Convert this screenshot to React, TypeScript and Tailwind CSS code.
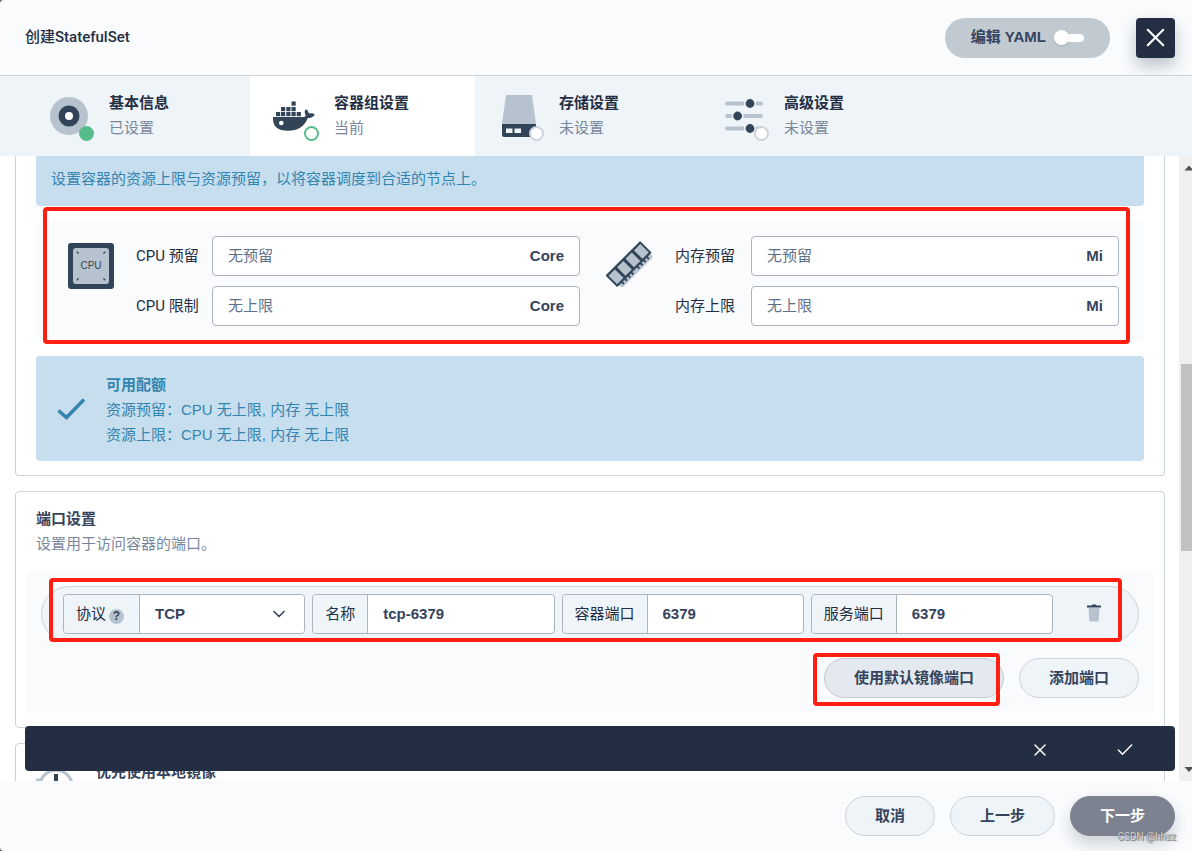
import { ReactNode } from 'react';
import { Check, ChevronDown, X } from 'lucide-react';

type StepState = 'done' | 'current' | 'pending';

const DARK = '#324558';
const LIGHT = '#b6c2cd';

function BasicIcon() {
  return (
    <svg width="48" height="48" viewBox="0 0 48 48">
      <circle cx="24" cy="24" r="19" fill={LIGHT} />
      <circle cx="24" cy="24" r="10.5" fill={DARK} />
      <circle cx="24" cy="24" r="4" fill="#fff" />
    </svg>
  );
}

function DockerIcon() {
  const boxes = [
    [21.5, 9.5],
    [11, 15], [16.3, 15], [21.5, 15],
    [6, 20], [11, 20], [16.3, 20], [21.5, 20], [26.7, 20],
  ];
  return (
    <svg width="48" height="48" viewBox="0 0 48 48" fill={DARK}>
      {boxes.map(([x, y]) => (
        <rect key={`${x}-${y}`} x={x} y={y} width="4.2" height="4.2" />
      ))}
      <path d="M3 25H33.5C35.3 25 36 24 35.4 22.6C34.4 20.6 34.4 18.6 35.8 17.2C37.6 18 38.6 19.6 38.9 21.6C41 20.9 43.3 21.2 44.8 22.4C43.6 24.9 41 26 37.8 26C34.6 34.2 28 38.8 18 38.8C8 38.8 2.4 34.8 3 25Z" />
      <circle cx="11.3" cy="31" r="2.3" fill="#fff" />
    </svg>
  );
}

function StorageIcon() {
  return (
    <svg width="48" height="48" viewBox="0 0 48 48">
      <path d="M11 3H37L41 32H7Z" fill={LIGHT} />
      <path d="M7 32H41V43A2 2 0 0 1 39 45H9A2 2 0 0 1 7 43Z" fill={DARK} />
      <rect x="11" y="36.5" width="6.5" height="4.5" fill="#eff4f9" />
      <rect x="19.5" y="36.5" width="6.5" height="4.5" fill="#eff4f9" />
    </svg>
  );
}

function SlidersIcon() {
  const rows = [[30, 11.5], [17.6, 24], [30, 36.5]];
  return (
    <svg width="48" height="48" viewBox="0 0 48 48">
      {rows.map(([x, y]) => (
        <g key={y}>
          <path d={`M7.2 ${y}H41`} stroke={LIGHT} strokeWidth="4" strokeLinecap="round" />
          <circle cx={x} cy={y} r="6" fill="#eff4f9" />
          <circle cx={x} cy={y} r="4.4" fill={DARK} />
        </g>
      ))}
    </svg>
  );
}

function CpuIcon() {
  return (
    <svg className="mt-[7px] shrink-0" width="46" height="46" viewBox="0 0 46 46">
      <rect width="46" height="46" rx="3" fill={DARK} />
      <rect x="5" y="5" width="36" height="36" rx="3" fill={LIGHT} />
      <g fill="none" stroke={DARK} strokeWidth="1.3">
        <path d="M8.8 8.8l1.8 1.8M37.2 8.8l-1.8 1.8M8.8 37.2l1.8-1.8M37.2 37.2l-1.8-1.8" />
      </g>
      <text x="23" y="25.5" textAnchor="middle" fontSize="10" fontFamily="Liberation Sans, sans-serif" fill={DARK}>
        CPU
      </text>
    </svg>
  );
}

function MemoryIcon() {
  return (
    <svg className="mt-[5px] w-[46px] shrink-0 overflow-visible" width="48" height="48" viewBox="0 0 48 48">
      <g transform="translate(-1.5 35) rotate(-45) scale(1.04)">
        <path d="M3 16H47V19A1.5 1.5 0 0 1 45.5 20.5H4.5A1.5 1.5 0 0 1 3 19Z" fill={LIGHT} />
        {[6, 10.5, 15, 19.5, 28, 32.5, 37, 41.5].map((x) => (
          <rect key={x} x={x} y="16" width="2" height="3" fill={DARK} />
        ))}
        <rect width="49" height="16.5" rx="1" fill={DARK} />
        {[2, 14, 26, 38].map((x) => (
          <rect key={x} x={x} y="2.3" width="9" height="12" fill={LIGHT} />
        ))}
      </g>
    </svg>
  );
}

function TrashIcon() {
  return (
    <svg width="16" height="20" viewBox="0 0 16 20">
      <path d="M2.5 4H13.500L12.8 16A1.5 1.5 0 0 1 11.3 17.500H4.7A1.5 1.5 0 0 1 3.2 16Z" fill={LIGHT} />
      <path d="M1 1.5H5.5L6.2 0.5H9.8L10.5 1.5H15V3.5H1Z" fill={DARK} />
    </svg>
  );
}

function PullIcon() {
  return (
    <svg width="40" height="40" viewBox="0 0 40 40" fill="none">
      <circle cx="20" cy="20.500" r="16.300" stroke={LIGHT} strokeWidth="3" />
      <path d="M0 12.500H5V15H0Z" fill={LIGHT} />
      <path d="M20 8V22" stroke={DARK} strokeWidth="4" />
    </svg>
  );
}

const steps: { title: string; status: string; state: StepState; icon: ReactNode }[] = [
  { title: '基本信息', status: '已设置', state: 'done', icon: <BasicIcon /> },
  { title: '容器组设置', status: '当前', state: 'current', icon: <DockerIcon /> },
  { title: '存储设置', status: '未设置', state: 'pending', icon: <StorageIcon /> },
  { title: '高级设置', status: '未设置', state: 'pending', icon: <SlidersIcon /> },
];

const dotStyles: Record<StepState, string> = {
  done: 'border-[#55bc8a] bg-[#55bc8a]',
  current: 'border-[#55bc8a] bg-white',
  pending: 'border-[#ccd3db] bg-white',
};

function Steps() {
  return (
    <nav className="flex h-20 shrink-0 bg-[#eff4f9] pl-[25px]">
      {steps.map((step) => (
        <div
          key={step.title}
          className={`flex w-[225px] items-center gap-4 pl-5 ${step.state === 'current' ? 'bg-white' : ''}`}
        >
          <div className="relative">
            {step.icon}
            <span className={`absolute -right-px -bottom-px size-[15px] rounded-full border-2 ${dotStyles[step.state]}`} />
          </div>
          <div className="leading-[25px]">
            <p className="font-bold text-[#242e42]">{step.title}</p>
            <p className="text-[#79879c]">{step.status}</p>
          </div>
        </div>
      ))}
    </nav>
  );
}

function Highlight({ className }: { className: string }) {
  return <div className={`pointer-events-none absolute rounded border-4 border-[#ff1f12] ${className}`} />;
}

function LimitField({ id, label, placeholder, unit }: { id: string; label: string; placeholder: string; unit: string }) {
  return (
    <div className="flex items-center">
      <label htmlFor={id} className="w-[76px] shrink-0 whitespace-nowrap text-[#242e42]">
        {label}
      </label>
      <div className="flex h-10 min-w-0 flex-1 items-center rounded border border-[#abb4be] bg-white px-[15px]">
        <input
          id={id}
          placeholder={placeholder}
          className="min-w-0 flex-1 outline-none placeholder:text-[#5f708a]"
        />
        <span className="font-['Liberation_Sans'] font-bold text-[#36435c]">{unit}</span>
      </div>
    </div>
  );
}

function PortField({ id, label, help, children }: { id: string; label: string; help?: boolean; children: ReactNode }) {
  return (
    <div className="flex h-10 min-w-0 flex-1 rounded border border-[#abb4be] bg-white">
      <div
        className={`flex shrink-0 items-center gap-[3px] rounded-l border-r border-[#abb4be] bg-[#eff4f9] pl-3 text-[#242e42] ${help ? 'pr-[15px]' : 'pr-3'}`}
      >
        <label htmlFor={id}>{label}</label>
        {help && (
          <span className="mt-1 flex size-[15px] items-center justify-center rounded-full bg-[#b6c2cd] font-['Liberation_Sans'] text-[12px] font-bold text-[#324558]">
            ?
          </span>
        )}
      </div>
      {children}
    </div>
  );
}

function TextPort({ id, label, value }: { id: string; label: string; value: string }) {
  return (
    <PortField id={id} label={label}>
      <input
        id={id}
        defaultValue={value}
        className="min-w-0 flex-1 px-[15px] font-['Liberation_Sans'] font-bold text-[#36435c] outline-none"
      />
    </PortField>
  );
}

function PillButton({ children, className = 'border-[#ccd3db] bg-[#eff4f9] text-[#36435c]' }: { children: ReactNode; className?: string }) {
  return (
    <button type="button" className={`h-10 rounded-full border px-[29px] font-bold whitespace-nowrap ${className}`}>
      {children}
    </button>
  );
}

function ResourceCard() {
  return (
    <section className="rounded-b border border-t-0 border-[#ccd3db] px-5 pb-[14px]">
      <p className="rounded-b bg-[#c7deef] px-[15px] pt-[11px] pb-[14px] leading-[25px] text-[#3385b0]">
        设置容器的资源上限与资源预留，以将容器调度到合适的节点上。
      </p>
      <div className="relative my-[15px] grid grid-cols-2 gap-[27px] rounded bg-[#f9fbfd] py-[15px] pr-[25px] pl-8">
        <div className="flex gap-[22px]">
          <CpuIcon />
          <div className="flex min-w-0 flex-1 flex-col gap-[10px]">
            <LimitField id="cpu-request" label="CPU 预留" placeholder="无预留" unit="Core" />
            <LimitField id="cpu-limit" label="CPU 限制" placeholder="无上限" unit="Core" />
          </div>
        </div>
        <div className="flex gap-[22px]">
          <MemoryIcon />
          <div className="flex min-w-0 flex-1 flex-col gap-[10px]">
            <LimitField id="memory-request" label="内存预留" placeholder="无预留" unit="Mi" />
            <LimitField id="memory-limit" label="内存上限" placeholder="无上限" unit="Mi" />
          </div>
        </div>
        <Highlight className="-top-[14px] right-[14px] -bottom-[3px] left-[7px]" />
      </div>
      <div className="flex items-center gap-5 rounded bg-[#c7deef] px-5 pt-4 pb-[14px] leading-[25px] text-[#3385b0]">
        <svg width="30" height="30" viewBox="0 0 30 30" fill="none">
          <path d="M2.5 15.500L10.5 22.500L28 4.500" stroke="currentColor" strokeWidth="3.5" />
        </svg>
        <div className="font-['Liberation_Sans','Noto_Sans_CJK_SC',sans-serif]">
          <p className="font-bold">可用配额</p>
          <p>资源预留：CPU 无上限, 内存 无上限</p>
          <p>资源上限：CPU 无上限, 内存 无上限</p>
        </div>
      </div>
    </section>
  );
}

function PortCard() {
  return (
    <section className="rounded border border-[#ccd3db] px-[10px] pt-[15px] pb-[14px]">
      <div className="px-[10px] leading-[25px]">
        <h2 className="font-bold text-[#36435c]">端口设置</h2>
        <p className="text-[#79879c]">设置用于访问容器的端口。</p>
      </div>
      <div className="relative mt-[14px] rounded bg-[#f9fbfd] p-[15px]">
        <div className="flex items-center gap-[7px] rounded-full border border-[#ccd3db] bg-[#eff4f9] py-[7px] pr-7 pl-[21px]">
          <PortField id="protocol" label="协议" help>
            <div className="relative min-w-0 flex-1">
              <select
                id="protocol"
                className="h-full w-full appearance-none rounded-r bg-white px-[15px] font-['Liberation_Sans'] font-bold text-[#36435c] outline-none"
              >
                <option>TCP</option>
              </select>
              <ChevronDown className="pointer-events-none absolute top-[9px] right-[15px] size-5 text-[#324558]" />
            </div>
          </PortField>
          <TextPort id="port-name" label="名称" value="tcp-6379" />
          <TextPort id="container-port" label="容器端口" value="6379" />
          <TextPort id="service-port" label="服务端口" value="6379" />
          <button type="button" aria-label="删除" className="ml-[18px] flex w-8 justify-center">
            <TrashIcon />
          </button>
        </div>
        <Highlight className="top-[7px] right-8 left-[23px] h-16" />
        <div className="mt-4 flex justify-end gap-[15px]">
          <div className="relative">
            <PillButton className="border-[#c1c9d1] bg-[#e3e9ef] text-[#36435c]">使用默认镜像端口</PillButton>
            <Highlight className="-top-[5px] right-1 -bottom-2 -left-[11px]" />
          </div>
          <PillButton>添加端口</PillButton>
        </div>
      </div>
    </section>
  );
}

function Scrollbar() {
  return (
    <div className="flex w-[13px] shrink-0 flex-col overflow-hidden bg-[#f0f0f0]">
      <svg className="mt-2 shrink-0" width="13" height="8" viewBox="0 0 13 8">
        <path d="M5.5 6.5L10 1.5L14.5 6.5Z" fill="#505050" />
      </svg>
      <div className="flex min-h-0 flex-1 flex-col">
        <div className="grow-[192]" />
        <div className="ml-[2px] grow-[187] bg-[#c1c1c1]" />
        <div className="grow-[214]" />
      </div>
      <svg className="mb-2 shrink-0" width="13" height="8" viewBox="0 0 13 8">
        <path d="M5.5 2L10 7L14.5 2Z" fill="#505050" />
      </svg>
    </div>
  );
}

export default function App() {
  return (
    <div className="h-screen bg-[#5c6675] font-[Roboto,'Noto_Sans_CJK_SC',sans-serif] text-[15px]">
      <div className="relative flex h-full flex-col overflow-hidden rounded-l bg-[#f9fbfd]">
        <header className="flex h-[76px] shrink-0 items-center border-b border-[#ccd3db] pr-[17px] pl-[25px]">
          <h1 className="flex-1 font-medium text-[#242e42]">创建StatefulSet</h1>
          <button
            type="button"
            role="switch"
            aria-checked="false"
            className="mr-[26px] flex h-10 items-center gap-2 rounded-full bg-[#c1c9d1] px-[26px] font-['Liberation_Sans','Noto_Sans_CJK_SC',sans-serif] font-bold text-[#36435c]"
          >
            编辑 YAML
            <span className="relative h-2 w-[30px] rounded-full bg-white">
              <span className="absolute -top-1 left-0 size-[15px] rounded-full bg-white shadow-sm" />
            </span>
          </button>
          <button
            type="button"
            aria-label="关闭"
            className="flex h-10 w-[39px] items-center justify-center rounded bg-[#242e42] text-white shadow-[0_8px_16px_rgba(36,46,66,0.28)]"
          >
            <X size={31} strokeWidth={1.6} />
          </button>
        </header>

        <Steps />

        <div className="relative flex min-h-0 flex-1 bg-white">
          <main className="flex min-w-0 flex-1 flex-col gap-[15px] overflow-hidden pr-[14px] pl-[15px]">
            <ResourceCard />
            <PortCard />
            <section className="flex shrink-0 gap-5 rounded border border-[#ccd3db] px-5 pt-4">
              <div className="pt-[6px]">
                <PullIcon />
              </div>
              <p className="leading-[25px] font-bold text-[#36435c]">优先使用本地镜像</p>
            </section>
          </main>
          <Scrollbar />
          <div className="absolute right-[17px] bottom-[10px] left-[25px] flex h-[45px] items-center justify-end gap-[65px] rounded bg-[#242e42] pt-[2px] pr-10 text-white">
            <button type="button" aria-label="放弃">
              <X size={20} strokeWidth={1.8} />
            </button>
            <button type="button" aria-label="确定">
              <Check size={20} strokeWidth={1.8} />
            </button>
          </div>
        </div>

        <footer className="flex h-[70px] shrink-0 items-center justify-end gap-[15px] pr-[17px]">
          <PillButton>取消</PillButton>
          <PillButton>上一步</PillButton>
          <PillButton className="border-[#7c828f] bg-[#7c828f] text-white shadow-[0_8px_16px_rgba(36,46,66,0.2)]">
            下一步
          </PillButton>
        </footer>
        <span className="absolute right-4 bottom-[7px] text-[10px] leading-[14px] text-[#d8dadd] [text-shadow:0_0_1px_#555,1px_1px_1px_#777]">
          CSDN @hhzz
        </span>
      </div>
    </div>
  );
}
